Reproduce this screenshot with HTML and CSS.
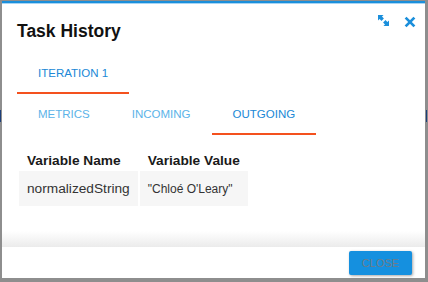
FILE: index.html
```html
<!DOCTYPE html>
<html lang="en">
<head>
    <meta charset="utf-8">
    <link rel="stylesheet" href="styles.css">
</head>
<body>
    <div class="peek peek--left"></div>
    <div class="peek peek--right"></div>

    <div class="modal">
        <div class="modal__header">
            <h1 class="modal__title">Task History</h1>
            <div class="modal__actions">
                <svg class="icon icon--expand" width="11" height="11" viewBox="0 0 11 11">
                    <path d="M0 0h5.6L4 1.6l1.9 1.9-2.4 2.4L1.6 4 0 5.6z"/>
                    <path d="M11 11H5.4L7 9.4 5.1 7.5l2.4-2.4L9.4 7 11 5.4z"/>
                </svg>
                <svg class="icon icon--close" width="12" height="12" viewBox="0 0 12 12">
                    <path d="M1.6 1.6l8.8 8.8M10.4 1.6l-8.8 8.8"/>
                </svg>
            </div>
        </div>

        <div class="modal__body">
            <div class="tabs">
                <div class="tab tab--active">ITERATION 1</div>
            </div>
            <div class="tabs tabs--sub">
                <div class="tab">METRICS</div>
                <div class="tab">INCOMING</div>
                <div class="tab tab--active">OUTGOING</div>
            </div>

            <table class="vars">
                <thead>
                    <tr>
                        <th>Variable Name</th>
                        <th>Variable Value</th>
                    </tr>
                </thead>
                <tbody>
                    <tr>
                        <td class="vars__name">normalizedString</td>
                        <td class="vars__value">"Chloé O'Leary"</td>
                    </tr>
                </tbody>
            </table>
        </div>

        <div class="modal__footer">
            <button class="btn-close">CLOSE</button>
        </div>
    </div>
</body>
</html>
```

FILE: styles.css
```css
/* Основа */
body {
    font-family: 'Liberation Sans', Arial, sans-serif;
    background-color: #8e8e8e;
    margin: 0;
    padding: 0;
    width: 428px;
    height: 282px;
    overflow: hidden;
    position: relative;
}

/* кусочки страницы за окном */
.peek {
    position: absolute;
    top: 110px;
    width: 1px;
    height: 12px;
    background-color: #1d3f7a;
}

.peek--left {
    left: 0;
}

.peek--right {
    right: 1px;
}

/* Окно */
.modal {
    margin: 1px 3px 0 2px;
    height: 275px;
    background-color: #ffffff;
    border-top: 2px solid #1b8fdb;
    box-shadow: inset 0 1px 0 #a8d5f4;
    display: flex;
    flex-direction: column;
}

.modal__header {
    display: flex;
    justify-content: space-between;
    align-items: flex-start;
    padding: 12px 9px 13px 15px;
}

.modal__title {
    margin: 6px 0 0;
    font-size: 17.5px;
    line-height: 20px;
    font-weight: bold;
    color: #111111;
}

.modal__actions {
    display: flex;
    align-items: flex-start;
    gap: 15px;
}

.icon--expand {
    fill: #1b8fdb;
}

.icon--close {
    margin-top: 1px;
    fill: none;
    stroke: #1b8fdb;
    stroke-width: 2.7;
}

.modal__body {
    flex: 1;
    background: linear-gradient(to bottom, #ffffff calc(100% - 16px), #ebebeb 100%);
}

/* Вкладки */
.tabs {
    display: flex;
    padding-left: 15px;
}

.tabs--sub {
    margin-top: 1px;
}

.tab {
    height: 38px;
    line-height: 38px;
    padding: 0 21px;
    font-size: 11.5px;
    color: #5cb3e8;
    border-bottom: 2px solid transparent;
}

.tab--active {
    color: #2088d6;
    border-bottom-color: #f4511e;
}

/* Таблица переменных */
.vars {
    margin: 13px 0 0 15px;
    border-collapse: separate;
    border-spacing: 2px;
}

.vars th {
    height: 19px;
    padding: 3px 8px 0;
    box-sizing: border-box;
    line-height: 16px;
    font-size: 13.7px;
    font-weight: bold;
    color: #1a1a1a;
    text-align: left;
    vertical-align: top;
}

.vars td {
    height: 35px;
    padding: 0 8px;
    background-color: #f6f6f6;
    color: #333333;
    vertical-align: middle;
}

.vars__name {
    font-size: 13.7px;
}

.vars__value {
    font-size: 12px;
}

/* Подвал */
.modal__footer {
    height: 31px;
    display: flex;
    justify-content: flex-end;
    align-items: flex-start;
    padding: 4px 13px 0 0;
    box-sizing: border-box;
}

.btn-close {
    width: 63px;
    height: 24px;
    padding: 0;
    font-family: 'Liberation Sans', Arial, sans-serif;
    font-size: 11px;
    color: #6e7c88;
    background-color: #1590df;
    border: none;
    border-radius: 2px;
    box-shadow: 1px 1px 3px rgba(0, 0, 0, 0.35);
    cursor: pointer;
}
```
